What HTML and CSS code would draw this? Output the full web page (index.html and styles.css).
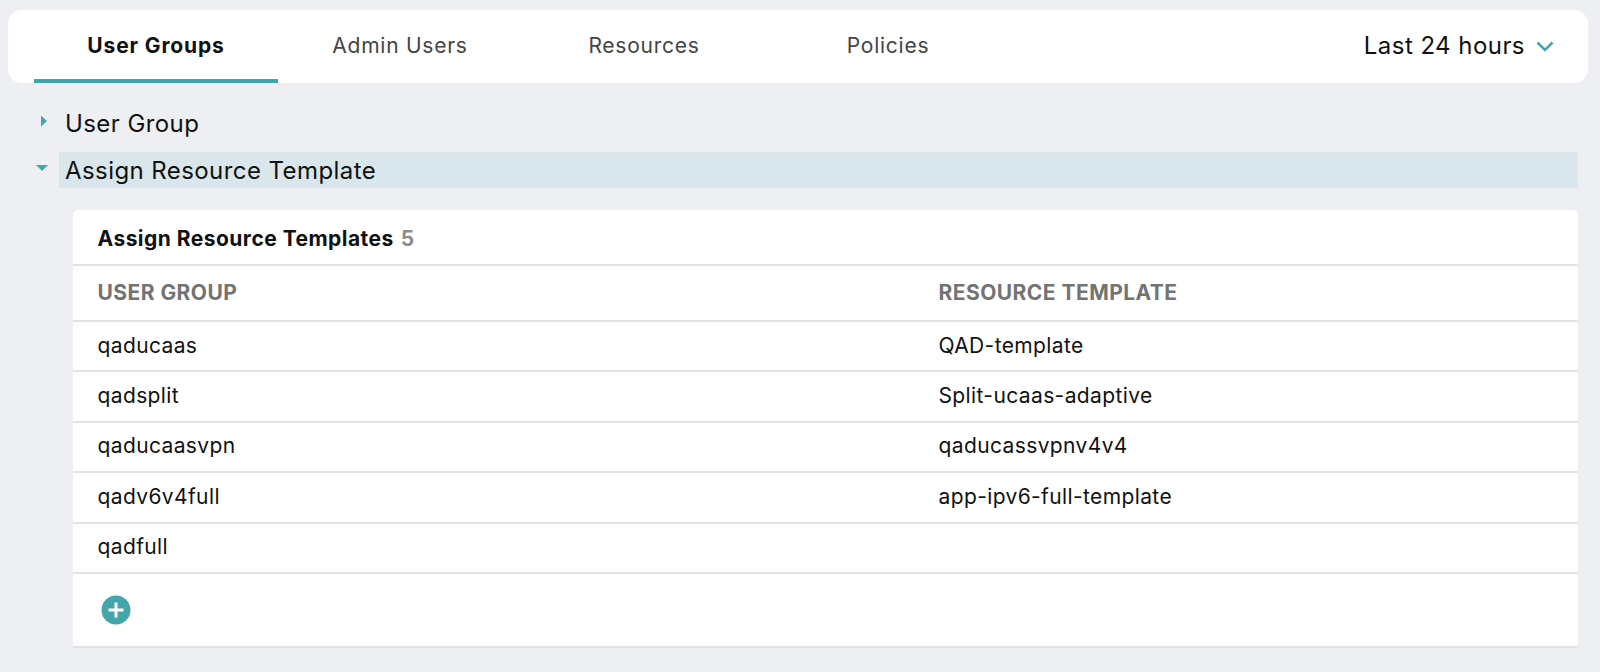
FILE: index.html

```html
<!DOCTYPE html>
<html lang="en">
<head>
  <meta charset="UTF-8" />
  <title>User Groups</title>
  <link rel="stylesheet" href="styles.css">
</head>
<body>
  <nav class="tabbar">
    <div class="tabs">
      <a class="tab active">User Groups</a>
      <a class="tab">Admin Users</a>
      <a class="tab">Resources</a>
      <a class="tab">Policies</a>
    </div>
    <div class="range">
      <span>Last 24 hours</span>
      <svg class="chevron" width="18" height="11" viewBox="0 0 18 11"><path d="M1.5 1.5 L9 9 L16.5 1.5" fill="none" stroke="#45a5ad" stroke-width="2.5"/></svg>
    </div>
  </nav>

  <section class="panel">
    <div class="panel-head">
      <svg class="caret" width="8" height="12" viewBox="0 0 8 12"><path d="M1 0.5 L7 6 L1 11.5 Z" fill="#45a5ad"/></svg>
      <span class="panel-title">User Group</span>
    </div>
    <div class="panel-head open">
      <svg class="caret" width="12" height="8" viewBox="0 0 12 8"><path d="M0 1 L12 1 L6 7 Z" fill="#45a5ad"/></svg>
      <span class="panel-title">Assign Resource Template</span>
    </div>
  </section>

  <div class="card">
    <div class="card-title">Assign Resource Templates <span class="count">5</span></div>
    <div class="row head">
      <div>USER GROUP</div>
      <div>RESOURCE TEMPLATE</div>
    </div>
    <div class="row"><div>qaducaas</div><div>QAD-template</div></div>
    <div class="row"><div>qadsplit</div><div>Split-ucaas-adaptive</div></div>
    <div class="row"><div>qaducaasvpn</div><div>qaducassvpnv4v4</div></div>
    <div class="row"><div>qadv6v4full</div><div>app-ipv6-full-template</div></div>
    <div class="row"><div>qadfull</div><div></div></div>
    <div class="card-foot">
      <svg width="30" height="30" viewBox="0 0 30 30"><circle cx="15" cy="15" r="14.5" fill="#45a5ad"/><path d="M15 7.5 V22.5 M7.5 15 H22.5" stroke="#fff" stroke-width="3"/></svg>
    </div>
  </div>
</body>
</html>
```

FILE: styles.css

```css
body {
  font-family: Inter, "Liberation Sans", sans-serif;
  margin: 0;
  padding: 10px 12px 25px 8px;
  background: #edeff3;
  color: #111;
  height: 672px;
  box-sizing: border-box;
  overflow: hidden;
}
.tabbar {
  display: flex;
  align-items: center;
  justify-content: space-between;
  height: 73px;
  padding: 0 34px 0 26px;
  background: #fff;
  border-radius: 14px;
}
.tabs {
  display: flex;
  align-self: stretch;
}
.tab {
  width: 244px;
  display: flex;
  align-items: center;
  justify-content: center;
  box-sizing: border-box;
  font-size: 21px;
  letter-spacing: 0.75px;
  color: #444;
  padding-bottom: 3px;
}
.tab.active {
  font-weight: 700;
  color: #111;
  border-bottom: 4px solid #3fa5ab;
  padding-bottom: 0;
  padding-top: 1px;
  letter-spacing: 0.85px;
}
.range {
  display: flex;
  align-items: center;
  gap: 11px;
  font-size: 24px;
  letter-spacing: 0.45px;
  padding-bottom: 3px;
}
.chevron {
  margin-top: 3px;
}
.panel {
  margin: 22px 10px 0 0;
  padding-left: 26px;
}
.panel-head {
  display: flex;
  align-items: center;
  height: 36px;
  margin-bottom: 11px;
  font-size: 24px;
  position: relative;
  padding-left: 32px;
}
.panel-head.open .panel-title {
  background: #d9e6eb;
}
.panel-title {
  flex: 1;
  align-self: stretch;
  display: flex;
  align-items: center;
  margin-left: -7px;
  padding-left: 6px;
  letter-spacing: 0.42px;
}
.caret {
  position: absolute;
  left: 6px;
  top: 10px;
}
.panel-head.open .caret {
  left: 2px;
  top: 12px;
}
.card {
  margin: 22px 10px 0 65px;
  background: #fff;
  border-radius: 5px 5px 0 0;
  border-bottom: 2px solid #e2e3e5;
}
.card-title {
  display: flex;
  align-items: center;
  gap: 7px;
  height: 56px;
  padding: 2px 0 0 24.5px;
  box-sizing: border-box;
  font-size: 21px;
  font-weight: 700;
  letter-spacing: 0.47px;
  border-bottom: 2px solid #e2e3e5;
}
.count {
  color: #8c8c8c;
  font-size: 21px;
}
.row {
  display: grid;
  grid-template-columns: 841px 1fr;
  align-items: center;
  height: 50.4px;
  padding: 0 0 2px 24.5px;
  box-sizing: border-box;
  font-size: 21px;
  letter-spacing: 0.38px;
  border-bottom: 2px solid #e2e3e5;
}
.row.head {
  height: 56px;
  font-weight: 700;
  letter-spacing: 0.45px;
  color: #737373;
}
.card-foot {
  display: flex;
  align-items: center;
  height: 72px;
  padding-left: 28px;
}
```
